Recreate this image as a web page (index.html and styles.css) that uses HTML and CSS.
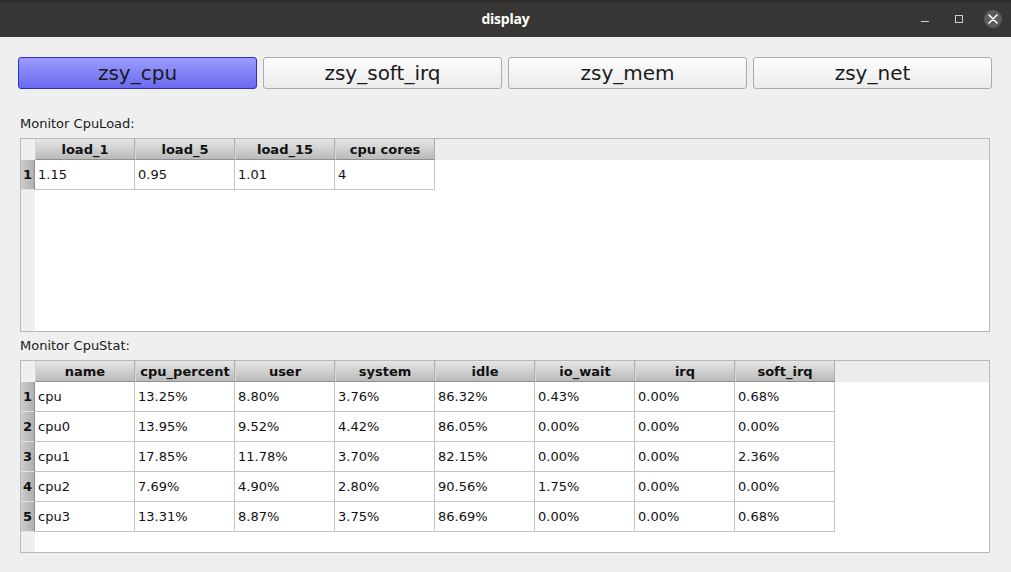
FILE: index.html
```html
<!DOCTYPE html>
<html>
<head>
<meta charset="utf-8">
<title>display</title>
<link rel="stylesheet" href="styles.css">
</head>
<body>
<div class="window">
  <header class="titlebar">
    <div class="title">display</div>
    <div class="controls">
      <span class="ctl min"></span>
      <span class="ctl max"></span>
      <span class="ctl close">
        <svg width="10" height="10" viewBox="0 0 10 10"><path d="M1 1L9 9M9 1L1 9" stroke="#ffffff" stroke-width="1.6" stroke-linecap="round"/></svg>
      </span>
    </div>
  </header>
  <main class="content">
    <nav class="tabs">
      <button class="tab active">zsy_cpu</button>
      <button class="tab">zsy_soft_irq</button>
      <button class="tab">zsy_mem</button>
      <button class="tab">zsy_net</button>
    </nav>

    <section class="group">
      <div class="label">Monitor CpuLoad:</div>
      <div class="frame frame-load">
        <table class="grid">
          <thead>
            <tr><th class="corner"></th><th>load_1</th><th>load_5</th><th>load_15</th><th>cpu cores</th></tr>
          </thead>
          <tbody>
            <tr><th class="rh">1</th><td>1.15</td><td>0.95</td><td>1.01</td><td>4</td></tr>
          </tbody>
        </table>
      </div>
    </section>

    <section class="group">
      <div class="label">Monitor CpuStat:</div>
      <div class="frame frame-stat">
        <table class="grid">
          <thead>
            <tr><th class="corner"></th><th>name</th><th>cpu_percent</th><th>user</th><th>system</th><th>idle</th><th>io_wait</th><th>irq</th><th>soft_irq</th></tr>
          </thead>
          <tbody>
            <tr><th class="rh">1</th><td>cpu</td><td>13.25%</td><td>8.80%</td><td>3.76%</td><td>86.32%</td><td>0.43%</td><td>0.00%</td><td>0.68%</td></tr>
            <tr><th class="rh">2</th><td>cpu0</td><td>13.95%</td><td>9.52%</td><td>4.42%</td><td>86.05%</td><td>0.00%</td><td>0.00%</td><td>0.00%</td></tr>
            <tr><th class="rh">3</th><td>cpu1</td><td>17.85%</td><td>11.78%</td><td>3.70%</td><td>82.15%</td><td>0.00%</td><td>0.00%</td><td>2.36%</td></tr>
            <tr><th class="rh">4</th><td>cpu2</td><td>7.69%</td><td>4.90%</td><td>2.80%</td><td>90.56%</td><td>1.75%</td><td>0.00%</td><td>0.00%</td></tr>
            <tr><th class="rh">5</th><td>cpu3</td><td>13.31%</td><td>8.87%</td><td>3.75%</td><td>86.69%</td><td>0.00%</td><td>0.00%</td><td>0.68%</td></tr>
          </tbody>
        </table>
      </div>
    </section>
  </main>
</div>
</body>
</html>
```
FILE: styles.css
```css
html, body {
  margin: 0;
  padding: 0;
  background: #efefef;
}
body {
  width: 1011px;
  height: 572px;
  overflow: hidden;
  font-family: "DejaVu Sans", sans-serif;
}
.window {
  display: flex;
  flex-direction: column;
  height: 572px;
}
.titlebar {
  height: 37px;
  flex: none;
  position: relative;
  display: flex;
  align-items: center;
  justify-content: center;
  background: linear-gradient(#2e2c2b 0px, #393735 4px, #383634 100%);
}
.title {
  color: #ffffff;
  font-family: "Open Sans", "DejaVu Sans", sans-serif;
  font-weight: 700;
  font-size: 14px;
  letter-spacing: -0.2px;
}
.controls {
  position: absolute;
  right: 9px;
  top: 0;
  height: 37px;
  display: flex;
  align-items: center;
}
.ctl {
  display: flex;
  align-items: center;
  justify-content: center;
}
.min {
  width: 8px;
  height: 1px;
  background: #cfcfcf;
  margin-top: 6px;
  margin-right: 26px;
}
.max {
  width: 6px;
  height: 6px;
  border: 1px solid #cfcfcf;
  margin-right: 21px;
}
.close {
  width: 18px;
  height: 18px;
  border-radius: 50%;
  background: #5e5c5a;
}
.content {
  flex: 1;
  padding: 20px 18px 0 18px;
}
.tabs {
  display: flex;
  gap: 6px;
}
.tab {
  width: 239px;
  height: 32px;
  box-sizing: border-box;
  margin: 0;
  padding: 0 0 1px 0;
  border: 1px solid #ababab;
  border-radius: 3px;
  background: linear-gradient(#fdfdfd, #ebebeb);
  font-family: "DejaVu Sans", sans-serif;
  font-size: 20px;
  color: #1a1a1a;
}
.tab.active {
  border-color: #2f2fc8;
  background: linear-gradient(#9c9cff, #6a6af0);
}
.group {
  margin-left: 2px;
  margin-right: 3px;
}
.label {
  font-size: 13px;
  line-height: 16px;
  color: #1a1a1a;
  padding-top: 27px;
  padding-bottom: 6px;
}
.group + .group .label {
  padding-top: 6px;
  padding-bottom: 6px;
}
.frame {
  border: 1px solid #b8b8b8;
  background:
    linear-gradient(#ececec, #ececec) top left / 100% 21px no-repeat,
    linear-gradient(to right, #efefef 14px, #ffffff 14px);
}
.frame-load { height: 192px; }
.frame-stat { height: 191px; }
.grid {
  border-collapse: separate;
  border-spacing: 0;
  table-layout: fixed;
  font-size: 13px;
  color: #111;
}
.grid th, .grid td {
  padding: 0;
  box-sizing: border-box;
}
.grid thead th {
  width: 100px;
  height: 21px;
  font-weight: 700;
  text-align: center;
  background: linear-gradient(#e6e6e6, #bababa);
  border-left: 1px solid #d6d6d6;
  border-right: 1px solid #b0b0b0;
  border-bottom: 1px solid #8f8f8f;
  line-height: 19px;
}
.grid thead th.corner {
  width: 14px;
  background: #efefef;
  border: none;
}
.grid td {
  height: 30px;
  padding-left: 3px;
  background: #ffffff;
  border-right: 1px solid #c4c4c4;
  border-bottom: 1px solid #c4c4c4;
  white-space: nowrap;
}
.grid th.rh {
  width: 14px;
  height: 30px;
  font-weight: 700;
  text-align: center;
  padding-left: 0;
  background: linear-gradient(to right, #cdcdcd, #b0b0b0);
  border-right: 1px solid #8f8f8f;
  border-bottom: 1px solid #e2e2e2;
}
```
